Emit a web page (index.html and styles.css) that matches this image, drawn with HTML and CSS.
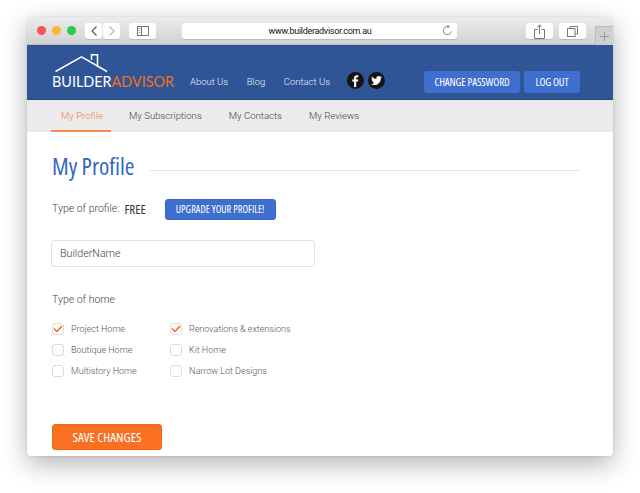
FILE: index.html
```html
<!DOCTYPE html>
<html lang="en">
<head>
<meta charset="utf-8">
<title>My Profile</title>
<link rel="stylesheet" href="styles.css">
</head>
<body>
<div class="window">
  <div class="toolbar">
    <div class="lights"><span class="light red"></span><span class="light yellow"></span><span class="light green"></span></div>
    <div class="tb-btn nav"><svg width="10" height="14" viewBox="0 0 10 14"><path d="M7.500 2.500 3 7l4.500 4.500" fill="none" stroke="#555" stroke-width="1.100"/></svg></div>
    <div class="tb-btn nav next"><svg width="10" height="14" viewBox="0 0 10 14"><path d="M2.500 2.500 7 7l-4.500 4.500" fill="none" stroke="#b5b5b5" stroke-width="1.100"/></svg></div>
    <div class="tb-btn side"><svg width="12" height="10" viewBox="0 0 12 10"><rect x=".5" y=".5" width="11" height="9" fill="none" stroke="#777"/><path d="M4.500 .5v9" stroke="#777"/><path d="M1.500 2.500h2M1.500 4.500h2M1.500 6.500h2" stroke="#aaa"/></svg></div>
    <div class="url">
      <span class="url-text">www.builderadvisor.com.au</span>
      <svg class="reload" width="11" height="11" viewBox="0 0 11 11"><path d="M9.300 6.300A4 4 0 1 1 6 1.600" fill="none" stroke="#888"/><path d="M5.500 0 8 1.700 5.500 3.400z" fill="#888"/></svg>
    </div>
    <div class="tb-btn tool share"><svg width="11" height="15" viewBox="0 0 11 15"><path d="M3.500 5.500H.5v9h10v-9h-3" fill="none" stroke="#777"/><path d="M5.500 10V1M3.200 3.200 5.500 1l2.300 2.200" fill="none" stroke="#777"/></svg></div>
    <div class="tb-btn tool tabs"><svg width="11" height="11" viewBox="0 0 11 11"><rect x=".5" y="2.500" width="7.500" height="8" fill="none" stroke="#777"/><path d="M3 2.500V.5h7.500v7.500H8" fill="none" stroke="#777"/></svg></div>
    <div class="newtab"><svg width="9" height="9" viewBox="0 0 9 9"><path d="M4.500 0v9M0 4.500h9" stroke="#999"/></svg></div>
  </div>

  <header class="header">
    <a class="logo">
      <svg class="roof" width="53" height="19" viewBox="0 0 53 19"><path d="M.5 17.500 26.500 2.800 52 17.500" fill="none" stroke="#fff" stroke-width="1.500"/><path d="M36.500 6V.8h6V13" fill="none" stroke="#fff" stroke-width="1.500"/></svg>
      <span class="wordmark">BUILDER<span class="accent">ADVISOR</span></span>
    </a>
    <nav class="main-nav"><a>About Us</a><a>Blog</a><a>Contact Us</a></nav>
    <div class="social">
      <span class="soc"><svg width="8" height="12" viewBox="0 0 8 12"><path d="M5.200 12V6.600h1.800l.3-2.100H5.200V3.200c0-.6.2-1 1-1h1.100V.3C7.100.3 6.500.2 5.800.2 4.200.2 3.100 1.200 3.100 3v1.500H1.200v2.100h1.900V12z" fill="#fff"/></svg></span>
      <span class="soc"><svg width="11" height="9" viewBox="0 0 24 20"><path d="M24 2.400c-.9.400-1.800.7-2.800.8 1-.6 1.800-1.600 2.200-2.700-1 .6-2 1-3.100 1.200A4.900 4.900 0 0 0 11.900 6.200C7.800 6 4.200 4 1.700.9.400 3.100 1 6 3.200 7.500c-.8 0-1.600-.2-2.200-.6 0 2.400 1.700 4.400 3.900 4.900-.7.200-1.500.2-2.200.1.600 2 2.400 3.400 4.600 3.400A9.900 9.900 0 0 1 0 17.800 14 14 0 0 0 21.500 5.400c1-.7 1.900-1.700 2.500-3z" fill="#fff"/></svg></span>
    </div>
    <div class="actions">
      <a class="btn btn-head pw">CHANGE PASSWORD</a>
      <a class="btn btn-head out">LOG OUT</a>
    </div>
  </header>

  <nav class="subnav">
    <a class="tab active">My Profile</a>
    <a class="tab">My Subscriptions</a>
    <a class="tab">My Contacts</a>
    <a class="tab">My Reviews</a>
  </nav>

  <main class="content">
    <div class="title-row">
      <h1>My Profile</h1>
      <span class="rule"></span>
    </div>
    <div class="profile-type">
      <span class="label">Type of profile:</span>
      <span class="free">FREE</span>
      <a class="btn upgrade">UPGRADE YOUR PROFILE!</a>
    </div>
    <div class="field">BuilderName</div>
    <div class="group-label">Type of home</div>
    <div class="checks">
      <ul class="col">
        <li class="check on"><span class="box"><svg width="10" height="8" viewBox="0 0 10 8"><path d="M1 3.500 4 6.500 9 1" fill="none" stroke="#f4661b" stroke-width="1.500"/></svg></span>Project Home</li>
        <li class="check"><span class="box"></span>Boutique Home</li>
        <li class="check"><span class="box"></span>Multistory Home</li>
      </ul>
      <ul class="col">
        <li class="check on"><span class="box"><svg width="10" height="8" viewBox="0 0 10 8"><path d="M1 3.500 4 6.500 9 1" fill="none" stroke="#f4661b" stroke-width="1.500"/></svg></span>Renovations &amp; extensions</li>
        <li class="check"><span class="box"></span>Kit Home</li>
        <li class="check"><span class="box"></span>Narrow Lot Designs</li>
      </ul>
    </div>
    <a class="btn save">SAVE CHANGES</a>
  </main>
</div>
</body>
</html>
```
FILE: styles.css
```css
* { box-sizing: border-box; }
html, body { margin: 0; height: 100%; background: #fff; overflow: hidden; }
body { padding: 17px 27px 0; font-family: Roboto, "Liberation Sans", sans-serif; font-weight: 300; color: #555; }
a { display: inline-block; }
ul { list-style: none; margin: 0; padding: 0; }

.window {
  width: 586px; height: 439px; background: #fff; border-radius: 5px 5px 4px 4px; overflow: hidden;
  box-shadow: 0 8px 26px rgba(0,0,0,.30), 0 0 3px rgba(0,0,0,.10);
  display: flex; flex-direction: column;
}
.toolbar {
  height: 28px; flex: none; display: flex; align-items: flex-start; padding-top: 6px;
  background: linear-gradient(#ececec, #d2d2d2); border-bottom: 1px solid #bdbdbd; position: relative;
}
.lights { display: flex; gap: 6px; margin: 3px 0 0 10px; }
.light { width: 9px; height: 9px; border-radius: 50%; }
.red { background: #f7545b; } .yellow { background: #fbb633; } .green { background: #2dc94d; }
.tb-btn { background: #fff; border-radius: 3px; height: 16px; display: flex; align-items: center; justify-content: center; box-shadow: 0 1px 0 rgba(0,0,0,.12); }
.nav { width: 17px; margin-left: 9px; }
.next { margin-left: 1px; }
.side { width: 27px; margin-left: 9px; }
.url { width: 275px; height: 16px; margin-left: 26px; background: #fff; border-radius: 3px; box-shadow: 0 1px 0 rgba(0,0,0,.12); display: flex; align-items: center; position: relative; }
.url-text { flex: 1; text-align: center; font: 400 9px Roboto, sans-serif; letter-spacing: -.3px; color: #111; padding-left: 1px; }
.reload { position: absolute; right: 4px; top: 2px; }
.tool { width: 27px; }
.share { margin-left: 69px; }
.tabs { margin-left: 6px; }
.newtab { position: absolute; right: 0; top: 9px; width: 18px; height: 19px; background: #cfcfcf; border: 1px solid #bbb; border-bottom: 0; border-right: 0; display: flex; align-items: center; justify-content: center; }

.header {
  height: 55px; flex: none; background: #2f5597; border-bottom: 1px solid #26477f; display: flex; align-items: flex-start; padding-left: 25px; position: relative;
}
.logo { width: 122px; padding-top: 9px; display: flex; flex-direction: column; }
.roof { margin-left: 3px; }
.wordmark { font: 400 14.400px/17px Lato, sans-serif; color: #fff; white-space: nowrap; }
.accent { color: #f26f21; }
.main-nav { display: flex; gap: 18.500px; margin: 30px 0 0 16px; font-size: 9.500px; line-height: 14px; color: #e8edf6; font-weight: 300; }
.social { display: flex; gap: 4px; margin: 27px 0 0 17px; }
.soc { width: 17px; height: 17px; border-radius: 50%; background: #151515; display: flex; align-items: center; justify-content: center; }
.actions { display: flex; gap: 4px; margin: 26px 0 0 39px; }
.btn { font-family: "Open Sans", "Liberation Sans", sans-serif; font-stretch: 75%; font-weight: 400; color: #fff; text-align: center; border-radius: 3px; background: #3f6fce; white-space: nowrap; }
.btn-head { height: 22px; line-height: 22px; font-size: 11px; letter-spacing: -.15px; }
.pw { width: 96px; }
.out { width: 56px; }

.subnav { height: 32px; flex: none; background: #ebebeb; display: flex; padding-left: 24px; }
.tab { height: 32px; line-height: 32px; font-size: 9.600px; color: #444; font-weight: 300; padding: 0 10px; margin-right: 7px; white-space: nowrap; }
.tab.active { color: #f2824a; border-bottom: 2px solid #f58a50; width: 60px; margin-right: 8px; }

.content { flex: 1; padding: 0 33px 0 25px; }
.title-row { display: flex; align-items: flex-start; height: 29px; margin-top: 20px; }
h1 { font: 400 23.500px/29px "Open Sans", "Liberation Sans", sans-serif; font-stretch: 75%; color: #3466c2; margin: 0 14px 0 0; white-space: nowrap; }
.rule { flex: 1; height: 1px; background: #e8e8e8; margin-top: 18px; }
.profile-type { display: flex; align-items: center; height: 21px; margin-top: 18px; }
.label { font-size: 10.500px; font-weight: 300; color: #444; padding-bottom: 2px; }
.free { font: 400 13px "Open Sans", "Liberation Sans", sans-serif; font-stretch: 75%; color: #333; margin-left: 5px; padding-bottom: 2px; }
.upgrade { width: 111px; height: 21px; line-height: 19px; font-size: 10.300px; border: 1px solid #3a66bd; margin-left: 19px; }
.field { width: 264px; height: 27px; margin: 20px 0 0 -1px; border: 1px solid #e2e2e2; border-radius: 3px; padding-left: 8px; line-height: 25px; font-size: 10.700px; font-weight: 300; color: #444; }
.group-label { font-size: 10.500px; font-weight: 300; color: #444; line-height: 14px; margin-top: 26px; }
.checks { display: flex; margin-top: 16px; }
.col { width: 118px; display: flex; flex-direction: column; gap: 9px; }
.check { display: flex; align-items: center; height: 12px; font-size: 9px; color: #555; font-weight: 300; white-space: nowrap; }
.box { width: 12px; height: 12px; border: 1px solid #dcdcdc; border-radius: 3px; margin-right: 7px; display: flex; align-items: center; justify-content: center; background: #fff; flex: none; }
.save { display: block; width: 110px; height: 26px; line-height: 24px; font-size: 13.300px; background: #f97022; border: 1px solid #ef6a1e; margin-top: 47px; }
```
